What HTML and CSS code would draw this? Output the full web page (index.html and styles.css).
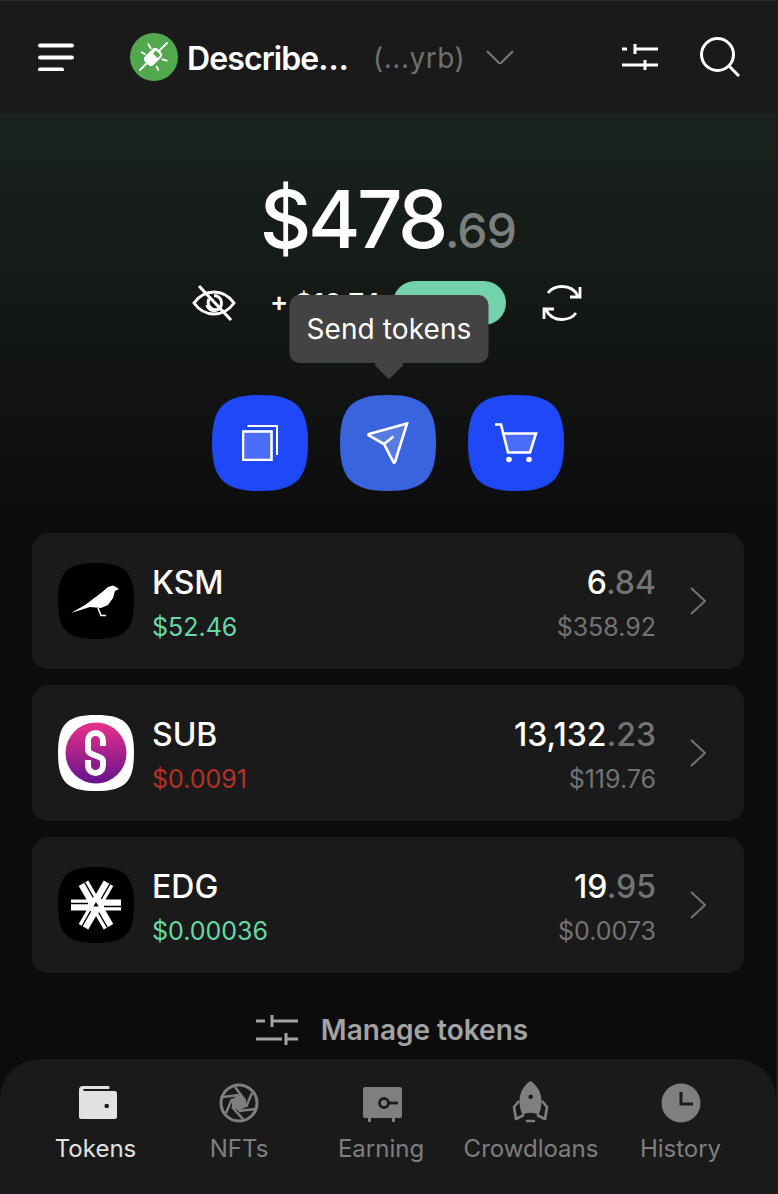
FILE: index.html
```html
<!DOCTYPE html>
<html lang="en">
<head>
    <meta charset="UTF-8">
    <meta name="viewport" content="width=device-width, initial-scale=1.0">
    <title>Wallet</title>
    <link rel="stylesheet" href="styles.css">
</head>
<body>
    <div class="app">
        <header class="topbar">
            <svg class="menu-icon" viewBox="0 0 36 28"><path d="M2 2.500h32M2 14.500h32M2 26.500h22"/></svg>
            <div class="account">
                <svg class="avatar" viewBox="0 0 48 48">
                    <circle cx="24" cy="24" r="24" fill="#52a84e"/>
                    <path d="M10 37l27-27M18.300 11.300l2.400 4M11.700 19.300l3.300 2M32.300 26.300l4.400 1.400M26.700 33.700l1.600 3.300" stroke="#fff" stroke-width="1.800" fill="none" stroke-linecap="round"/>
                    <rect x="17" y="15" width="12" height="18" rx="4" transform="rotate(45 23 24)" fill="#fff"/>
                    <path d="M26 17.500l4.500 4.500-3 3-4.500-4.500z" fill="#52a84e"/>
                </svg>
                <span class="account-name">Describe…</span>
                <span class="account-addr">(...yrb)</span>
                <svg class="account-chevron" viewBox="0 0 28 14"><path d="M1 1l13 13L27 1"/></svg>
            </div>
            <div class="topbar-actions">
                <svg class="filter-icon" viewBox="0 0 36 28"><path d="M0 6h5M13 6h23M13 1v10M0 22h23M23 17v10M23 22h13"/></svg>
                <svg class="search-icon" viewBox="0 0 40 40"><circle cx="17.500" cy="17.500" r="16"/><path d="M29 29l10 10"/></svg>
            </div>
        </header>

        <main class="content">
            <section class="hero">
                <div class="balance">$478<span class="balance-cents">.69</span></div>
                <div class="change-row">
                    <svg class="eye-icon" viewBox="0 0 44 36">
                        <path d="M2 18c5-7 12-11 20-11s15 4 20 11c-5 7-12 11-20 11S7 25 2 18z"/>
                        <path d="M22 10.500a7.500 7.500 0 1 1-7.200 9.600"/>
                        <path d="M27 24a7.500 7.500 0 0 1-10-10M7 1l32 34"/>
                    </svg>
                    <span class="change-value">+ $16.74</span>
                    <span class="change-pill">+3.6 %</span>
                    <svg class="reload-icon" viewBox="0 0 40 36">
                        <path d="M36 11C33 5 27 1.500 20 1.500 14 1.500 9 4 6 8"/>
                        <path d="M38 2v10H28"/>
                        <path d="M4 25c3 6 9 9.500 16 9.500 6 0 11-2.500 14-6.500"/>
                        <path d="M2 34V24h10"/>
                    </svg>
                </div>
                <div class="actions">
                    <button class="action-btn">
                        <svg class="icon-copy" viewBox="0 0 36 36">
                            <rect x="1" y="6.500" width="28.500" height="28.500" fill="#fff" fill-opacity=".2"/>
                            <path class="thin" d="M5.500 1h29.500v29"/>
                        </svg>
                    </button>
                    <button class="action-btn is-hover">
                        <svg class="icon-send" viewBox="0 0 42 42">
                            <path d="M40 1.500L28 40c-.3.800-1.200.8-1.600.1L17 22 1.800 13.500c-.7-.5-.5-1.400.2-1.600z" fill="#fff" fill-opacity=".15"/>
                            <path d="M17 22l9.500-7.500"/>
                        </svg>
                        <span class="tooltip">Send tokens</span>
                    </button>
                    <button class="action-btn">
                        <svg class="icon-cart" viewBox="0 0 44 40">
                            <path d="M8.500 10.500H42l-6 19H13.500z" fill="#fff" fill-opacity=".2" stroke="none"/>
                            <path d="M1 1.500h6l7 28h22l6-19H9"/>
                            <circle class="dot" cx="15" cy="36.500" r="2.800"/>
                            <circle class="dot" cx="35" cy="36.500" r="2.800"/>
                        </svg>
                    </button>
                </div>
            </section>

            <section class="token-list">
                <div class="token-row">
                    <div class="token-logo logo-black">
                        <svg viewBox="0 0 76 76">
                            <path d="M13 50l14-8 16-12 7-6 5-1.500 3 1.500 3 2-4 2-2 7-5 7-7 3-11-1-19 6z" fill="#fff"/>
                            <path d="M40 45l3 7.500h5" stroke="#fff" stroke-width="1.500" fill="none"/>
                        </svg>
                    </div>
                    <div class="token-info">
                        <div class="token-symbol">KSM</div>
                        <div class="token-price up">$52.46</div>
                    </div>
                    <div class="token-amounts">
                        <div class="token-amount">6<span>.84</span></div>
                        <div class="token-value">$358.92</div>
                    </div>
                    <svg class="row-chevron" viewBox="0 0 16 28"><path d="M1 1l14 13L1 27"/></svg>
                </div>
                <div class="token-row">
                    <div class="token-logo logo-white">
                        <svg viewBox="0 0 76 76">
                            <defs>
                                <linearGradient id="subGrad" x1="0" y1="0" x2="0" y2="1">
                                    <stop offset="0" stop-color="#e8308a"/>
                                    <stop offset="1" stop-color="#66148f"/>
                                </linearGradient>
                            </defs>
                            <circle cx="38" cy="38" r="30.500" fill="url(#subGrad)"/>
                            <path d="M45 31v-5.500a7.500 7.500 0 0 0-15 0V35c0 5 15 6 15 11v4.500a7.500 7.500 0 0 1-15 0V45" fill="none" stroke="#fff" stroke-width="6"/>
                        </svg>
                    </div>
                    <div class="token-info">
                        <div class="token-symbol">SUB</div>
                        <div class="token-price down">$0.0091</div>
                    </div>
                    <div class="token-amounts">
                        <div class="token-amount">13,132<span>.23</span></div>
                        <div class="token-value">$119.76</div>
                    </div>
                    <svg class="row-chevron" viewBox="0 0 16 28"><path d="M1 1l14 13L1 27"/></svg>
                </div>
                <div class="token-row">
                    <div class="token-logo logo-black">
                        <svg viewBox="0 0 76 76">
                            <defs>
                                <g id="edgArm">
                                    <path d="M13 38h50" stroke="#fff" stroke-width="11"/>
                                    <path d="M13 36.500h17M46 39.500h17" stroke="#000" stroke-width="1.300"/>
                                </g>
                            </defs>
                            <use href="#edgArm"/>
                            <use href="#edgArm" transform="rotate(60 38 38)"/>
                            <use href="#edgArm" transform="rotate(120 38 38)"/>
                            <path d="M38 35l2.600 4.500h-5.200z" fill="#000"/>
                        </svg>
                    </div>
                    <div class="token-info">
                        <div class="token-symbol">EDG</div>
                        <div class="token-price up">$0.00036</div>
                    </div>
                    <div class="token-amounts">
                        <div class="token-amount">19<span>.95</span></div>
                        <div class="token-value">$0.0073</div>
                    </div>
                    <svg class="row-chevron" viewBox="0 0 16 28"><path d="M1 1l14 13L1 27"/></svg>
                </div>
            </section>

            <div class="manage">
                <svg class="manage-icon" viewBox="0 0 42 32"><path d="M0 7h9M16 7h26M16 1v12M0 25h26M30 19v12M30 25h12"/></svg>
                <span>Manage tokens</span>
            </div>
        </main>

        <nav class="tabbar">
            <div class="tab active">
                <svg viewBox="0 0 40 40">
                    <path d="M3 7c0-2.500 1.500-4 4-4h25c1 0 1.500.5 1.500 1.500S33 6 32 6H8c-1 0-1 2 0 2h31c1 0 2 1 2 2v24c0 1-1 2-2 2H5c-1 0-2-1-2-2z"/>
                    <circle cx="30.700" cy="23" r="2.300" fill="#1a1a1a"/>
                </svg>
                <span>Tokens</span>
            </div>
            <div class="tab">
                <svg viewBox="0 0 40 40">
                    <circle cx="20" cy="20" r="18" fill="none" stroke="currentColor" stroke-width="3"/>
                    <path d="M20 12l7 4v8l-7 4-7-4v-8z"/>
                    <path d="M16 4l9 12M33 10l-6 14M36 26l-16 2M24 36l-11-12M7 30l6-14M4 14l16-2" fill="none" stroke="currentColor" stroke-width="2.500"/>
                </svg>
                <span>NFTs</span>
            </div>
            <div class="tab">
                <svg viewBox="0 0 40 40">
                    <path d="M2 6c0-1 1-2 2-2h35c1 0 2 1 2 2v27c0 1-1 2-2 2H4c-1 0-2-1-2-2z"/>
                    <path d="M7 35h3v4H7zM31 35h3v4h-3z"/>
                    <circle cx="23" cy="20" r="4.500" fill="none" stroke="#1a1a1a" stroke-width="2.800"/>
                    <path d="M27 20h10" stroke="#1a1a1a" stroke-width="2.800"/>
                </svg>
                <span>Earning</span>
            </div>
            <div class="tab">
                <svg viewBox="0 0 40 40">
                    <path d="M19.500-2c-5 3-11 10-11 20 0 5 1 10 3 14 5-3 11-3 16 0 2-4 3-9 3-14 0-10-6-17-11-20z"/>
                    <circle cx="19.700" cy="13.700" r="2.300" fill="#1a1a1a"/>
                    <path d="M8 18l-5 6 2 12 8-4M31 18l5 6-2 12-8-4" fill="none" stroke="currentColor" stroke-width="2.600" stroke-linejoin="round"/>
                    <path d="M16 38h7" stroke="currentColor" stroke-width="2.600" stroke-linecap="round"/>
                </svg>
                <span>Crowdloans</span>
            </div>
            <div class="tab">
                <svg viewBox="0 0 40 40">
                    <circle cx="20" cy="20" r="19.500"/>
                    <path d="M20 9v12h12" fill="none" stroke="#1a1a1a" stroke-width="3"/>
                </svg>
                <span>History</span>
            </div>
        </nav>
    </div>
</body>
</html>
```

FILE: styles.css
```css
* {
    box-sizing: border-box;
    margin: 0;
    padding: 0;
}

html, body {
    height: 100%;
    background: #0c0c0c;
}

body {
    font-family: 'Inter', sans-serif;
    color: #fff;
    overflow: hidden;
}

.app {
    display: flex;
    flex-direction: column;
    height: 1194px;
    width: 776px;
    border-top: 1px solid #2a2a2a;
    box-shadow: 2px 0 0 #1e1e1e;
}

svg {
    display: block;
    flex-shrink: 0;
}

/* Top bar */
.topbar {
    display: flex;
    align-items: center;
    height: 112px;
    padding: 0 36px 0 38px;
    background: #1a1a1a;
}

.menu-icon {
    width: 36px;
    height: 28px;
    fill: none;
    stroke: #fff;
    stroke-width: 4;
    stroke-linecap: round;
}

.account {
    display: flex;
    align-items: center;
    margin-left: 56px;
}

.avatar {
    width: 48px;
    height: 48px;
}

.account-name {
    margin-left: 9px;
    padding-top: 2px;
    font-size: 32px;
    font-weight: 600;
    letter-spacing: -0.9px;
}

.account-addr {
    margin-left: 25px;
    padding-top: 2px;
    font-size: 28px;
    color: #6f6f6f;
    letter-spacing: 0.5px;
}

.account-chevron {
    width: 28px;
    height: 14px;
    margin-left: 21px;
    fill: none;
    stroke: #7a7a7a;
    stroke-width: 2;
}

.topbar-actions {
    display: flex;
    align-items: center;
    gap: 42px;
    margin-left: auto;
}

.filter-icon {
    width: 36px;
    height: 28px;
    fill: none;
    stroke: #fff;
    stroke-width: 3;
}

.search-icon {
    width: 40px;
    height: 40px;
    fill: none;
    stroke: #fff;
    stroke-width: 3;
}

/* Main */
.content {
    flex: 1;
    display: flex;
    flex-direction: column;
    padding: 0 32px;
    background: linear-gradient(180deg, #1a231d 0, #0c0c0c 420px);
}

.hero {
    display: flex;
    flex-direction: column;
    align-items: center;
}

.balance {
    margin-top: 61px;
    font-size: 80px;
    line-height: 90px;
    font-weight: 500;
    letter-spacing: -3.5px;
}

.balance-cents {
    font-size: 48px;
    letter-spacing: -0.8px;
    color: #7b807d;
}

.change-row {
    display: flex;
    align-items: center;
    height: 44px;
    margin-top: 5px;
    margin-left: -2px;
}

.eye-icon {
    width: 44px;
    height: 36px;
    fill: none;
    stroke: #fff;
    stroke-width: 3;
}

.change-value {
    margin-left: 34px;
    width: 123px;
    font-size: 27px;
    font-weight: 600;
    white-space: nowrap;
}

.change-pill {
    width: 113px;
    height: 44px;
    padding-right: 18px;
    line-height: 50px;
    border-radius: 22px;
    background: #73d2ac;
    color: #0c0c0c;
    font-size: 22px;
    font-weight: 600;
    text-align: right;
}

.reload-icon {
    width: 40px;
    height: 36px;
    margin-left: 36px;
    fill: none;
    stroke: #fff;
    stroke-width: 2.8;
}

.actions {
    display: flex;
    gap: 32px;
    margin-top: 70px;
}

.action-btn {
    position: relative;
    display: flex;
    align-items: center;
    justify-content: center;
    width: 96px;
    height: 96px;
    border: none;
    background: none;
    cursor: pointer;
}

.action-btn::before {
    content: "";
    position: absolute;
    inset: 0;
    background: #1f48f7;
    clip-path: path("M48 0C84 0 96 12 96 48C96 84 84 96 48 96C12 96 0 84 0 48C0 12 12 0 48 0Z");
}

.action-btn.is-hover::before {
    background: #3a64dd;
}

.action-btn svg {
    position: relative;
    fill: none;
    stroke: #fff;
    stroke-width: 2.6;
}

.icon-copy {
    width: 36px;
    height: 36px;
}

.icon-send {
    width: 42px;
    height: 42px;
}

.icon-cart {
    width: 44px;
    height: 40px;
}

.action-btn svg .thin {
    stroke-width: 2;
}

.action-btn .dot {
    fill: #fff;
    stroke: none;
}

.tooltip {
    position: absolute;
    left: 50%;
    bottom: 128px;
    transform: translateX(-50%);
    padding: 0 17px;
    height: 68px;
    line-height: 68px;
    margin-left: 1px;
    border-radius: 10px;
    background: #434343;
    color: #fff;
    font-family: 'Inter', sans-serif;
    font-size: 28px;
    white-space: nowrap;
    letter-spacing: 0.1px;
}

.tooltip::after {
    content: "";
    position: absolute;
    left: 50%;
    top: 59px;
    width: 21px;
    height: 21px;
    margin-left: -11px;
    background: #434343;
    transform: rotate(45deg);
    border-radius: 2px;
}

/* Token rows */
.token-list {
    display: flex;
    flex-direction: column;
    gap: 16px;
    margin-top: 42px;
}

.token-row {
    display: flex;
    align-items: center;
    height: 136px;
    padding: 0 38px 0 26px;
    border-radius: 16px;
    background: #1a1a1a;
}

.token-logo {
    width: 76px;
    height: 76px;
    clip-path: path("M38 0C67 0 76 9 76 38C76 67 67 76 38 76C9 76 0 67 0 38C0 9 9 0 38 0Z");
}

.logo-black {
    background: #000;
}

.logo-white {
    background: #fff;
}

.token-info {
    margin-left: 18px;
    padding-top: 4px;
}

.token-amounts {
    margin-left: auto;
    padding-top: 4px;
    text-align: right;
}

.token-symbol,
.token-amount {
    font-size: 32px;
    line-height: 40px;
    font-weight: 500;
}

.token-amount span {
    color: #737373;
}

.token-price,
.token-value {
    margin-top: 8px;
    font-size: 25px;
    line-height: 32px;
}

.up {
    color: #66d9a6;
}

.down {
    color: #b4312a;
}

.token-value {
    color: #737373;
}

.row-chevron {
    width: 16px;
    height: 28px;
    margin-left: 34px;
    fill: none;
    stroke: #737373;
    stroke-width: 2;
}

/* Manage */
.manage {
    display: flex;
    align-items: center;
    justify-content: center;
    gap: 23px;
    margin-top: 40px;
    padding-left: 8px;
    color: #a3a3a3;
    font-size: 28px;
    font-weight: 600;
}

.manage-icon {
    width: 42px;
    height: 32px;
    fill: none;
    stroke: #a3a3a3;
    stroke-width: 3;
}

/* Bottom nav */
.tabbar {
    display: grid;
    grid-template-columns: 191px 96px 188px 112px 1fr;
    height: 135px;
    padding: 24px 2px 0 0;
    border-radius: 40px 40px 0 0;
    background: #1a1a1a;
    margin-top: -1px;
}

.tab {
    display: flex;
    flex-direction: column;
    align-items: center;
    gap: 11px;
    font-size: 24px;
    color: #7f7f7f;
}

.tab svg {
    width: 40px;
    height: 40px;
    fill: currentColor;
    overflow: visible;
}

.tab.active {
    color: #e2e2e2;
}
```
